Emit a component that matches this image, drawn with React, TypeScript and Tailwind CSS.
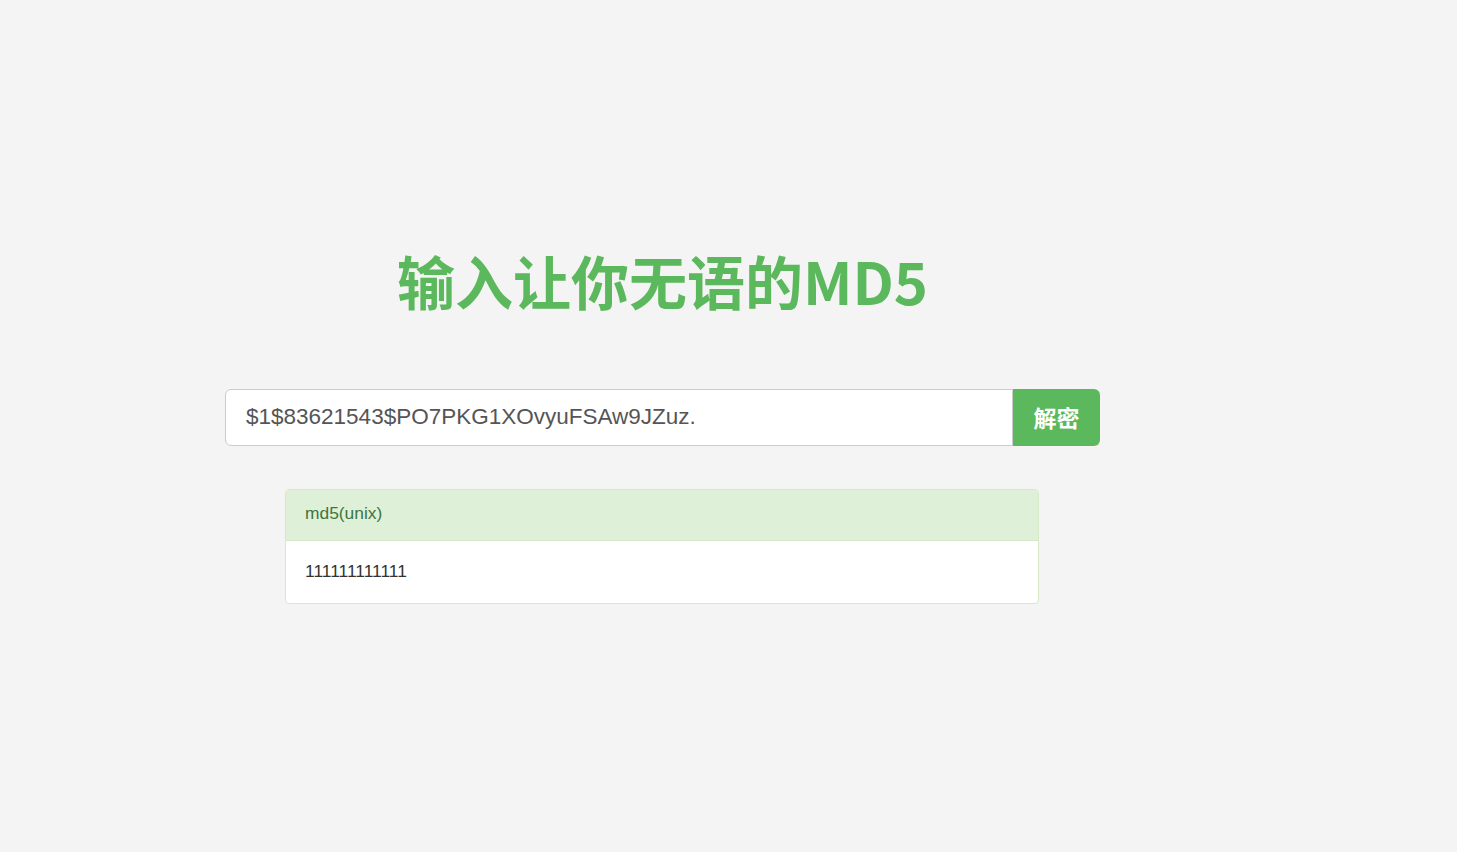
import React from 'react';

const App: React.FC = () => {
  return (
    <div className="min-h-screen w-full bg-[#f4f4f4] font-['Liberation_Sans','Noto_Sans_CJK_SC',sans-serif]">
      <div className="ml-[225px] w-[875px] pt-[240px]">
        <h1 className="text-center text-[58px] leading-[80px] font-bold text-[#5cb85c] font-['Noto_Sans_CJK_SC',sans-serif]">
          输入让你无语的MD5
        </h1>
        <div className="mt-[69px] flex h-[57px]">
          <input
            className="flex-1 rounded-l-[6px] border border-[#ccc] bg-white px-[20px] pb-[1px] text-[22.5px] text-[#555] outline-none"
            defaultValue="$1$83621543$PO7PKG1XOvyuFSAw9JZuz."
          />
          <button className="w-[87px] rounded-r-[6px] bg-[#5cb85c] text-[23px] font-bold text-white font-['Noto_Sans_CJK_SC',sans-serif]">
            解密
          </button>
        </div>
        <div className="ml-[60px] mt-[43px] w-[754px] rounded-[4px] border border-[#d6e9c6] bg-white">
          <div className="h-[51px] flex items-center rounded-t-[3px] border-b border-[#d6e9c6] bg-[#dff0d8] px-[19px] pb-[3px] text-[17.4px] text-[#3c763d]">
            md5(unix)
          </div>
          <div className="h-[62px] flex items-center px-[19px] pb-[1px] text-[17.4px] text-[#333]">
            111111111111
          </div>
        </div>
      </div>
    </div>
  );
};

export default App;
